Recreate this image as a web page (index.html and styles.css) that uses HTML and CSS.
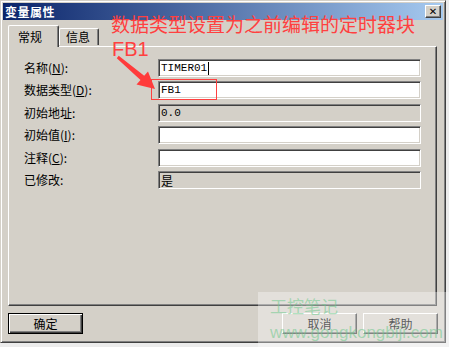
FILE: index.html
```html
<!DOCTYPE html>
<html lang="zh-CN">
<head>
  <meta charset="UTF-8" />
  <title>变量属性</title>
  <link rel="stylesheet" href="styles.css">
</head>
<body>
  <div class="window">
    <div class="titlebar">
      <span class="title">变量属性</span>
      <span class="close">&#x2715;</span>
    </div>

    <div class="tabs">
      <a class="tab active">常规</a>
      <a class="tab">信息</a>
    </div>

    <div class="panel">
      <div class="form">
        <label>名称(<u>N</u>):</label>
        <div class="field">TIMER01<span class="caret"></span></div>
        <label>数据类型(<u>D</u>):</label>
        <div class="field">FB1</div>
        <label>初始地址:</label>
        <div class="field readonly">0.0</div>
        <label>初始值(<u>I</u>):</label>
        <div class="field"></div>
        <label>注释(<u>C</u>):</label>
        <div class="field"></div>
        <label>已修改:</label>
        <div class="field readonly cjk">是</div>
      </div>
    </div>

    <div class="buttons">
      <button class="default">确定</button>
      <span class="spacer"></span>
      <button>取消</button>
      <button>帮助</button>
    </div>
  </div>

  <!-- annotation drawn over the screenshot -->
  <div class="note">数据类型设置为之前编辑的定时器块</div>
  <div class="note-fb">FB1</div>
  <div class="mark"></div>
  <svg class="arrow" width="449" height="347" viewBox="0 0 449 347">
    <polygon points="118.7,55.8 144.2,75.8 148,71.5 155,89 136.5,84.5 140.5,80 116.8,58.2" fill="#ff3b3b" />
  </svg>

  <div class="watermark">
    <div class="wm-title">工控笔记</div>
    <div class="wm-url">www.gongkongbiji.com</div>
  </div>
</body>
</html>
```

FILE: styles.css
```css
body {
  margin: 0;
  background: #ececec;
  font-family: "Noto Sans CJK SC", "Liberation Sans", sans-serif;
  font-size: 12px;
  color: #000;
  position: relative;
  width: 449px;
  height: 347px;
  overflow: hidden;
}
.window {
  width: 446px;
  height: 343px;
  box-sizing: border-box;
  background: #d4d0c8;
  border-top: 1px solid #d4d0c8;
  border-left: 1px solid #d4d0c8;
  border-right: 1px solid #404040;
  border-bottom: 1px solid #404040;
  box-shadow: inset 1px 1px #fff, inset -1px -1px #808080;
  padding: 2px 2px 2px 2px;
}
.titlebar {
  height: 17px;
  display: flex;
  align-items: center;
  justify-content: space-between;
  background: linear-gradient(to right, #0a246a, #a6caf0);
  padding: 0 2px 0 2px;
}
.title {
  color: #fff;
  font-weight: bold;
  font-size: 12px;
  letter-spacing: 0.5px;
}
.close {
  width: 16px;
  height: 13px;
  box-sizing: border-box;
  background: #d4d0c8;
  border-top: 1px solid #fff;
  border-left: 1px solid #fff;
  border-right: 1px solid #404040;
  border-bottom: 1px solid #404040;
  box-shadow: inset -1px -1px #808080;
  font-family: "DejaVu Sans", sans-serif;
  font-size: 10px;
  font-weight: bold;
  line-height: 11px;
  text-align: center;
}
.tabs {
  display: flex;
  align-items: flex-end;
  height: 26px;
  margin-left: 5px;
  position: relative;
  z-index: 1;
}
.tab {
  height: 17px;
  box-sizing: border-box;
  padding: 0 8px 0 6px;
  border-top: 1px solid #fff;
  border-left: 1px solid #fff;
  border-right: 1px solid #404040;
  box-shadow: inset -1px 0 #808080;
  border-radius: 2px 2px 0 0;
  line-height: 15px;
  font-size: 12px;
  margin-bottom: 1px;
}
.tab.active {
  height: 22px;
  width: 51px;
  padding: 3px 0 0 9px;
  background: #d4d0c8;
  margin-bottom: -1px;
}
.panel {
  width: 429px;
  height: 260px;
  box-sizing: border-box;
  margin-left: 5px;
  border-top: 1px solid #fff;
  border-left: 1px solid #fff;
  border-right: 1px solid #404040;
  border-bottom: 1px solid #404040;
  box-shadow: inset -1px -1px #808080;
  padding: 12px 15px 0 15px;
}
.form {
  display: grid;
  grid-template-columns: 134px 1fr;
  grid-auto-rows: 18px;
  row-gap: 4.4px;
  align-items: center;
}
label {
  font-size: 12px;
  line-height: 18px;
}
label u {
  text-decoration-thickness: 1px;
}
.field {
  height: 18px;
  box-sizing: border-box;
  background: #fff;
  border: 1px solid;
  border-color: #808080 #fff #fff #808080;
  box-shadow: inset 1px 1px #404040, inset -1px -1px #d4d0c8;
  padding: 1px 0 0 2px;
  font-family: "Liberation Mono", "Noto Sans CJK SC", monospace;
  font-size: 11px;
  line-height: 15px;
  display: flex;
  align-items: center;
}
.field.readonly {
  background: #d4d0c8;
}
.field.cjk {
  font-family: "Noto Sans CJK SC", sans-serif;
  font-size: 12px;
}
.caret {
  width: 1px;
  height: 13px;
  background: #000;
  margin-left: 1px;
}
.buttons {
  display: flex;
  gap: 6px;
  margin: 7px 0 0 5px;
  padding-right: 5px;
}
.spacer {
  flex: 1;
}
button {
  width: 75px;
  height: 21px;
  box-sizing: border-box;
  background: #d4d0c8;
  font-family: "Noto Sans CJK SC", sans-serif;
  font-size: 12px;
  padding: 0;
  border-top: 1px solid #fff;
  border-left: 1px solid #fff;
  border-right: 1px solid #404040;
  border-bottom: 1px solid #404040;
  box-shadow: inset -1px -1px #808080;
}
button.default {
  border: 1px solid #000;
  box-shadow: inset 1px 1px #fff, inset -1px -1px #404040, inset -2px -2px #808080;
}
.note {
  position: absolute;
  left: 111px;
  top: 13px;
  color: #ff4040;
  font-size: 19px;
  line-height: 22px;
  white-space: nowrap;
}
.note-fb {
  position: absolute;
  left: 112px;
  top: 37px;
  color: #ff4040;
  font-family: "Liberation Sans", sans-serif;
  font-size: 20px;
  line-height: 24px;
}
.mark {
  position: absolute;
  left: 151px;
  top: 79px;
  width: 66px;
  height: 21px;
  box-sizing: border-box;
  border: 1px solid #ff4040;
}
.arrow {
  position: absolute;
  left: 0;
  top: 0;
}
.watermark {
  position: absolute;
  left: 258px;
  top: 292px;
  width: 191px;
  height: 55px;
  background: rgba(255, 255, 255, 0.35);
  padding: 4px 0 0 12px;
  box-sizing: border-box;
  color: rgba(110, 200, 140, 0.55);
}
.wm-title {
  font-size: 17px;
  line-height: 20px;
}
.wm-url {
  font-family: "Liberation Sans", sans-serif;
  font-size: 17px;
  line-height: 22px;
  margin-top: 6px;
}
```
